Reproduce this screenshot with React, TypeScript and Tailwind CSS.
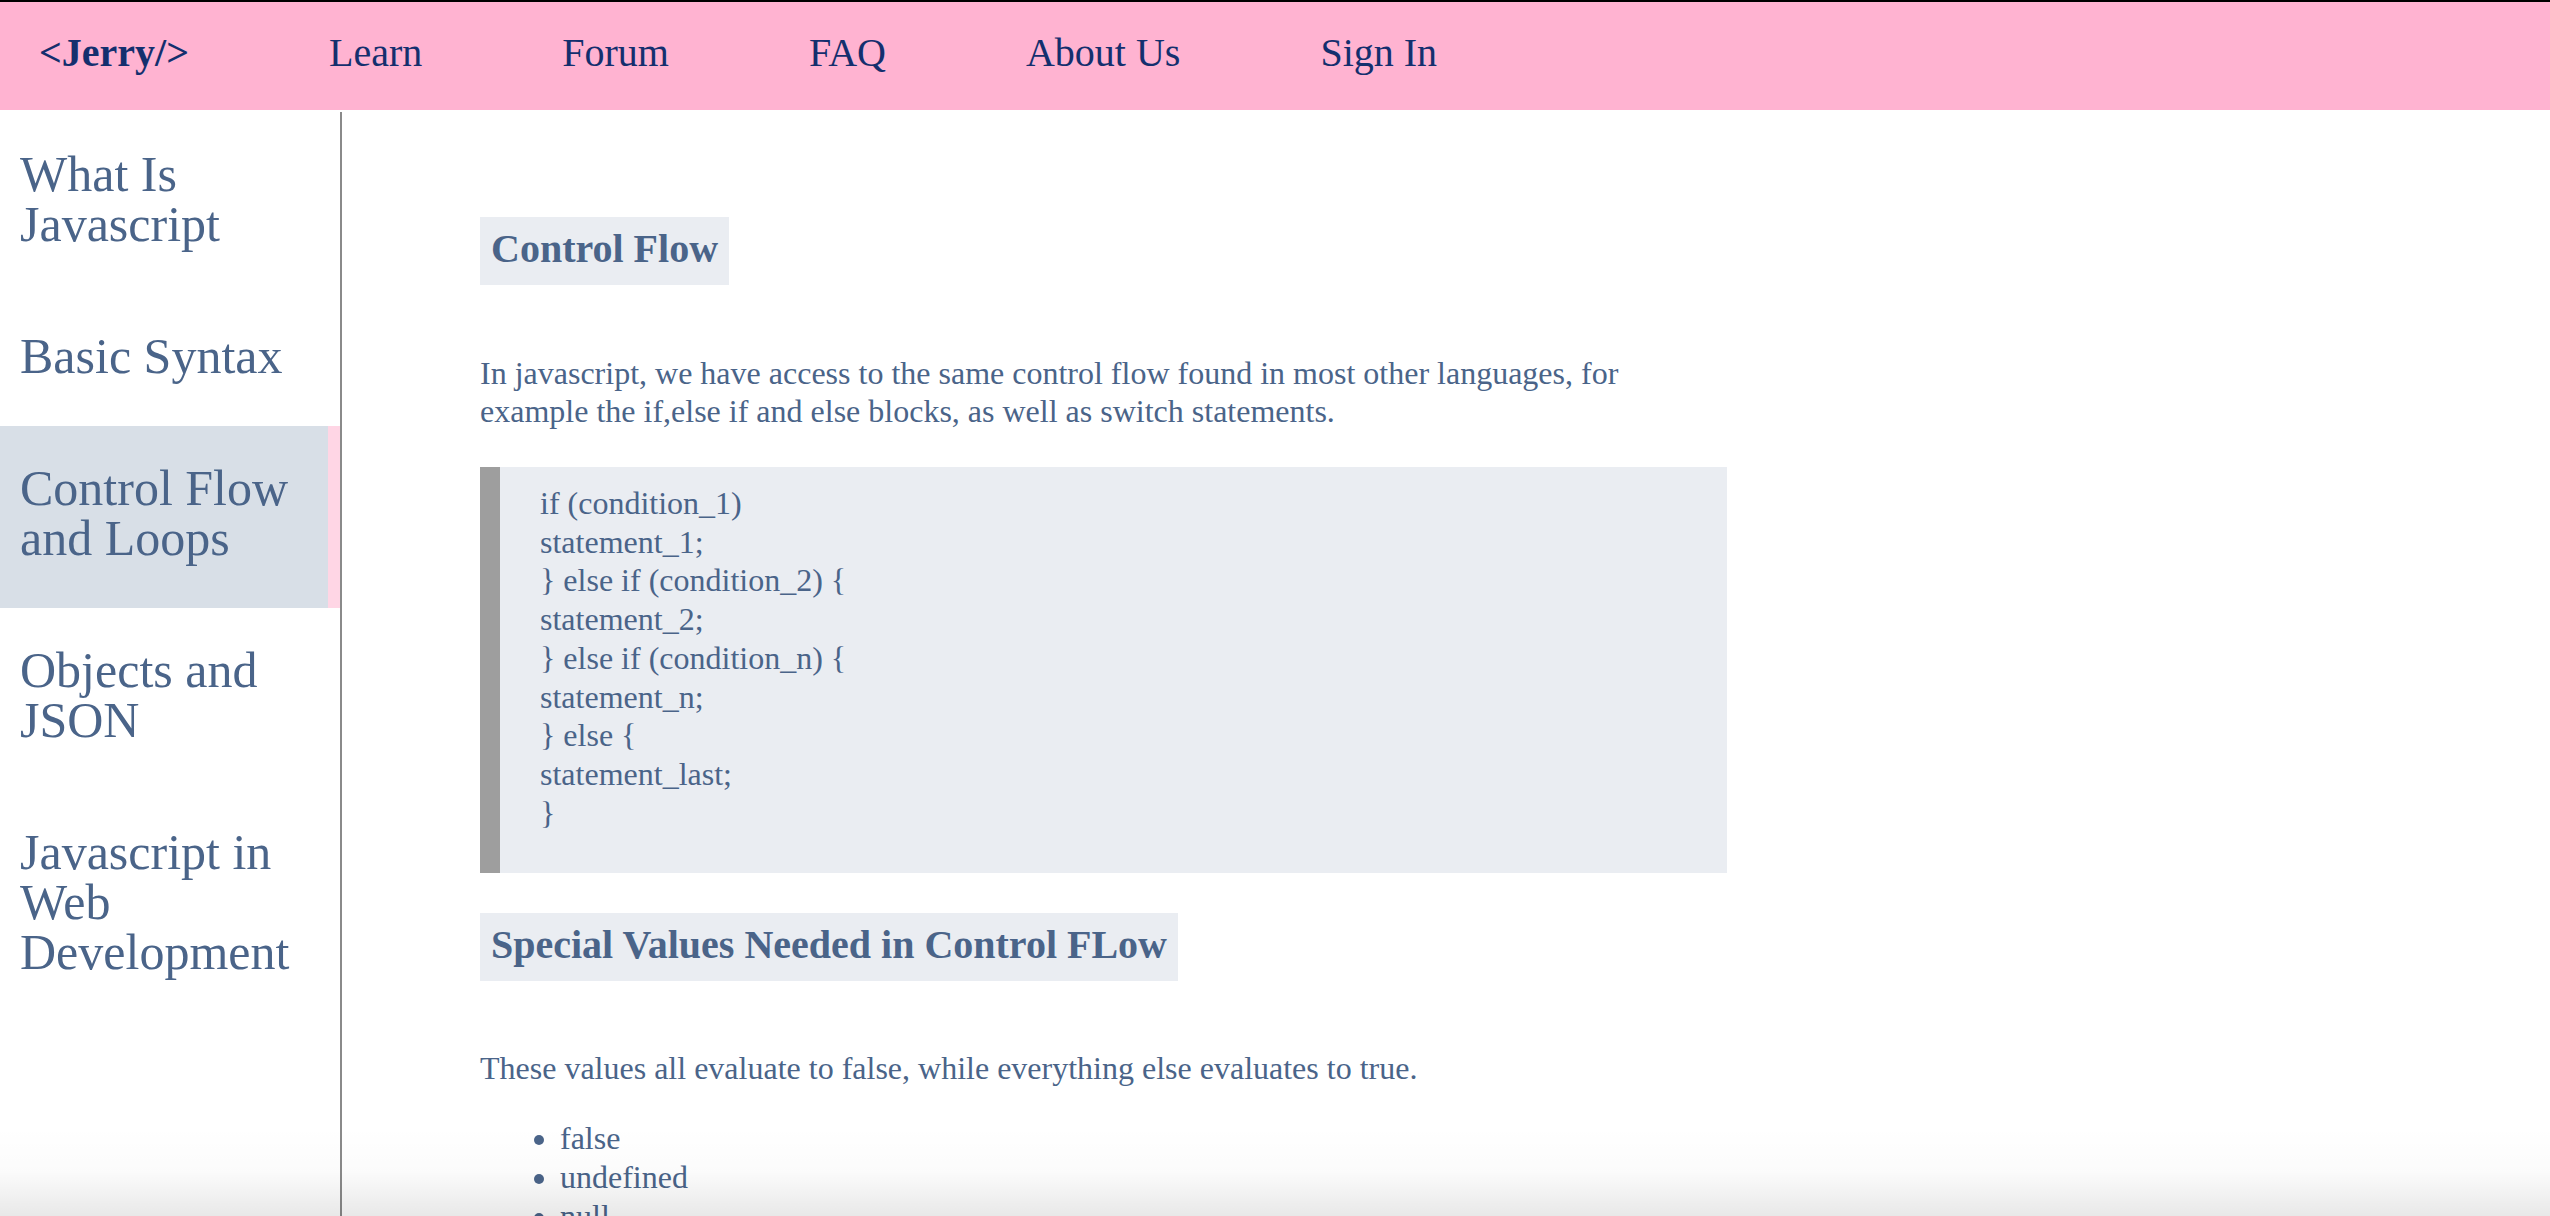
const navLinks = ['Learn', 'Forum', 'FAQ', 'About Us', 'Sign In']

const topics = [
  { label: 'What Is Javascript', active: false },
  { label: 'Basic Syntax', active: false },
  { label: 'Control Flow and Loops', active: true },
  { label: 'Objects and JSON', active: false },
  { label: 'Javascript in Web Development', active: false },
]

const codeLines = [
  'if (condition_1)',
  'statement_1;',
  '} else if (condition_2) {',
  'statement_2;',
  '} else if (condition_n) {',
  'statement_n;',
  '} else {',
  'statement_last;',
  '}',
]

const falsyValues = ['false', 'undefined', 'null', '0', 'NaN', 'the empty string ("")']

function Header() {
  return (
    <header className="h-[108px] shrink-0 bg-[#FFB3D1] flex items-center gap-[140px] pl-[39px] pb-[6px] text-[40px] leading-[46px] text-[#142F6E]">
      <a className="font-bold">&lt;Jerry/&gt;</a>
      {navLinks.map((link) => (
        <a key={link}>{link}</a>
      ))}
    </header>
  )
}

function Sidebar() {
  return (
    <nav className="w-[342px] shrink-0 mt-[2px] border-r-2 border-[#8A8A8A] text-[50px] leading-[50px] text-[#4A6489]">
      {topics.map((t) => (
        <div
          key={t.label}
          className={
            t.active
              ? 'pl-[20px] pr-[8px] pt-[37px] pb-[45px] bg-[#D8DFE7] border-r-[12px] border-[#FFD6E5]'
              : 'pl-[20px] pr-[20px] pt-[37px] pb-[45px]'
          }
        >
          {t.label}
        </div>
      ))}
    </nav>
  )
}

function SectionTitle({ children }: { children: React.ReactNode }) {
  return (
    <h2 className="inline-block bg-[#EAEDF2] px-[11px] pt-[8px] pb-[12px] text-[40px] leading-[48px] font-bold">
      {children}
    </h2>
  )
}

export default function App() {
  return (
    <div className="relative h-screen overflow-hidden flex flex-col border-t-2 border-black bg-white font-['Liberation_Serif','Times_New_Roman',serif]">
      <Header />
      <div className="flex flex-1 min-h-0">
        <Sidebar />
        <main className="flex-1 pl-[138px] pt-[107px] text-[#4A6489]">
          <div className="w-[1247px]">
            <SectionTitle>Control Flow</SectionTitle>
            <p className="mt-[69px] text-[32px] leading-[38.4px]">
              In javascript, we have access to the same control flow found in most other languages, for
              example the if,else if and else blocks, as well as switch statements.
            </p>
            <div className="mt-[36px] border-l-[20px] border-[#9E9E9E] bg-[#EAEDF2] pl-[40px] pt-[17px] pb-[40px] text-[32px] leading-[38.75px]">
              {codeLines.map((line, i) => (
                <div key={i}>{line}</div>
              ))}
            </div>
            <div className="mt-[40px]">
              <SectionTitle>Special Values Needed in Control FLow</SectionTitle>
            </div>
            <p className="mt-[68px] text-[32px] leading-[38.4px]">
              These values all evaluate to false, while everything else evaluates to true.
            </p>
            <ul className="mt-[32px] pl-[80px] list-disc text-[32px] leading-[39px]">
              {falsyValues.map((v) => (
                <li key={v}>{v}</li>
              ))}
            </ul>
          </div>
        </main>
      </div>
      <div className="pointer-events-none absolute inset-x-0 bottom-0 h-[90px] bg-linear-to-b from-transparent via-black/[0.015] to-black/[0.09]" />
    </div>
  )
}
